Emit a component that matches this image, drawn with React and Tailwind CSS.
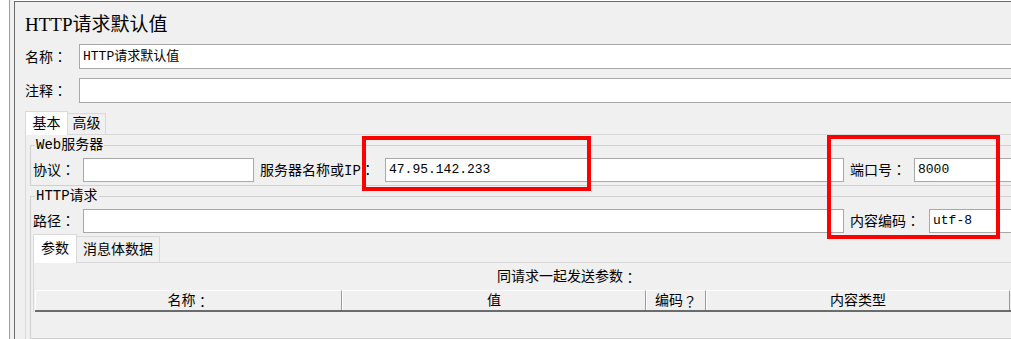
const txt =
  "text-[14px] leading-[16px] text-black whitespace-nowrap font-['Liberation_Mono','Noto_Sans_CJK_SC',monospace]";
const inputTxt =
  "text-[13px] leading-[16px] text-black whitespace-nowrap font-['Liberation_Mono','Noto_Sans_CJK_SC',monospace]";
const input = "h-full border border-[#a8a8a8] bg-white pl-[3px] flex items-center";

function L({ text, className = "" }) {
  const hasColon = text.endsWith("：");
  const body = hasColon ? text.slice(0, -1) : text;
  return (
    <div className={`${className} ${txt}`}>
      {body}
      {hasColon && (
        <span className="font-['Noto_Sans_CJK_JP',sans-serif]">：</span>
      )}
    </div>
  );
}

function HeaderCell({ w, text }) {
  return (
    <div
      className={`${w} border-t border-l border-white border-r border-r-[#9a9a9a] flex items-center justify-center ${txt}`}
    >
      {text.endsWith("：") || text.endsWith("？") ? (
        <>
          {text.slice(0, -1)}
          <span className="font-['Noto_Sans_CJK_JP',sans-serif]">{text.slice(-1)}</span>
        </>
      ) : (
        text
      )}
    </div>
  );
}

export default function App() {
  return (
    <div className="relative w-[1011px] h-[339px] overflow-hidden bg-white flex">
      <div className="w-[9px] shrink-0 bg-white" />
      <div className="w-[5px] shrink-0 border-l border-[#a0a0a0] bg-[#f0f0f0]" />
      <div className="w-[1110px] shrink-0 mt-[1px] border-l border-t border-[#6b6b6b] bg-[#f0f0f0] pl-[10px] flex flex-col">
        {/* Title */}
        <div className="h-[42px] flex items-center pt-[3px] text-[19px] leading-[22px] text-black whitespace-nowrap font-['Liberation_Serif','Noto_Sans_CJK_SC',serif]">
          HTTP请求默认值
        </div>

        {/* Name */}
        <div className="flex items-center h-[25px]">
          <L className="w-[54px]" text="名称：" />
          <div className={`flex-1 ${input}`}>
            <span className={inputTxt}>HTTP请求默认值</span>
          </div>
        </div>

        {/* Comment */}
        <div className="flex items-center h-[25px] mt-[9px]">
          <L className="w-[54px]" text="注释：" />
          <div className={`flex-1 ${input}`} />
        </div>

        {/* Tabs */}
        <div className="flex items-end h-[23px] mt-[8px]">
          <div className={`relative z-10 -mb-[1px] w-[43px] h-[24px] border-t border-l border-r border-[#d9d9d9] bg-white flex items-center justify-center ${txt}`}>
            基本
          </div>
          <div className={`w-[38px] h-[21px] border-t border-r border-[#d9d9d9] bg-[#f0f0f0] flex items-center justify-center ${txt}`}>
            高级
          </div>
        </div>

        {/* Tab panel */}
        <div className="border-t border-l border-[#d9d9d9] pl-[4px] pt-[2px] flex-1 flex flex-col">
          {/* Web server group */}
          <fieldset className="border border-[#d0d0d0] pl-[2px] pb-[3px] min-w-0">
            <legend className={`ml-[2px] px-[1px] ${txt}`}>Web服务器</legend>
            <div className="flex items-center h-[24px] mt-[5px]">
              <L className="w-[50px]" text="协议：" />
              <div className={`w-[171px] ${input}`} />
              <L className="ml-[6px] w-[125px]" text="服务器名称或IP：" />
              <div className={`w-[459px] ${input}`}>
                <span className={inputTxt}>47.95.142.233</span>
              </div>
              <L className="ml-[6px] w-[64px]" text="端口号：" />
              <div className={`flex-1 ${input}`}>
                <span className={inputTxt}>8000</span>
              </div>
            </div>
          </fieldset>

          {/* HTTP request group */}
          <fieldset className="border border-[#d0d0d0] pl-[2px] mt-[2px] flex-1 min-w-0">
            <legend className={`ml-[2px] px-[1px] ${txt}`}>HTTP请求</legend>
            <div className="flex items-center h-[24px] mt-[5px]">
              <L className="w-[50px]" text="路径：" />
              <div className={`w-[761px] ${input}`} />
              <L className="ml-[6px] w-[79px]" text="内容编码：" />
              <div className={`flex-1 ${input}`}>
                <span className={inputTxt}>utf-8</span>
              </div>
            </div>

            {/* Sub tabs */}
            <div className="flex items-end h-[28px] mt-[1px]">
              <div className={`relative z-10 -mb-[1px] w-[44px] h-[29px] border-t border-l border-r border-[#d9d9d9] bg-white flex items-center justify-center ${txt}`}>
                参数
              </div>
              <div className={`w-[83px] h-[26px] border-t border-r border-[#d9d9d9] bg-[#f0f0f0] flex items-center justify-center ${txt}`}>
                消息体数据
              </div>
            </div>

            {/* Sub panel */}
            <div className="border-t border-l border-[#d9d9d9] pl-[1px]">
              <L className="h-[27px] flex items-center pl-[462px]" text="同请求一起发送参数：" />
              <div className="flex h-[22px] border-b-2 border-[#6b6b6b]">
                <HeaderCell w="w-[307px]" text="名称：" />
                <HeaderCell w="w-[304px]" text="值" />
                <HeaderCell w="w-[60px]" text="编码？" />
                <HeaderCell w="w-[304px]" text="内容类型" />
                <div className="flex-1 border-t border-white" />
              </div>
            </div>
          </fieldset>
        </div>
      </div>

      {/* Red annotation boxes */}
      <div className="absolute left-[362px] top-[136px] w-[229px] h-[55px] border-[4px] border-[#ff0000]" />
      <div className="absolute left-[827px] top-[135px] w-[173px] h-[104px] border-[4px] border-[#ff0000]" />
    </div>
  );
}
